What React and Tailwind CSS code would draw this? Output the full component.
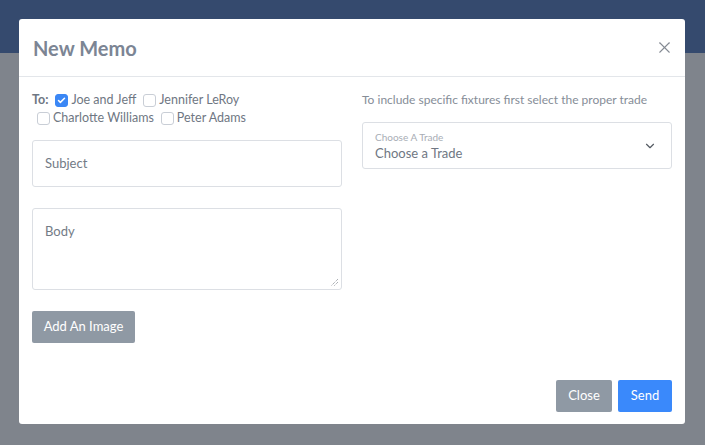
import { Check, ChevronDown, X } from 'lucide-react'

const recipients = [
  [{ name: 'Joe and Jeff', checked: true }, { name: 'Jennifer LeRoy' }],
  [{ name: 'Charlotte Williams' }, { name: 'Peter Adams' }],
]

function Box({ name, checked }) {
  return (
    <label className="flex items-center gap-[3px]">
      <span
        className={`flex h-[13px] w-[13px] items-center justify-center rounded-[3px] border ${
          checked ? 'border-[#3b87f5] bg-[#3b87f5]' : 'border-[#c9ced6] bg-white'
        }`}
      >
        {checked && <Check size={9} strokeWidth={4} className="text-white" />}
      </span>
      <span>{name}</span>
    </label>
  )
}

export default function App() {
  return (
    <div className="relative h-[445px] w-[705px] overflow-hidden bg-[#7f848c] font-['Lato',sans-serif]">
      <div className="h-[53px] bg-[#354a6e]" />

      <div className="absolute left-[19px] top-[19px] flex h-[405px] w-[666px] flex-col rounded-[3px] bg-white">
        <div className="flex h-[58px] items-center justify-between border-b border-[#e3e6ea] pl-[14px] pr-[11px]">
          <h2 className="text-[20px] font-bold text-[#7c8594]">New Memo</h2>
          <X size={19} strokeWidth={1.4} className="text-[#858b94]" />
        </div>

        <div className="flex flex-1 gap-[20px] px-[13px] pt-[15px]">
          <div className="flex w-[310px] flex-col text-[12.5px] text-[#6f7783]">
            <div className="flex flex-col gap-[2px] leading-[16px]">
              <div className="flex items-center gap-[7px]">
                <span className="font-bold">To:</span>
                <Box {...recipients[0][0]} />
                <Box {...recipients[0][1]} />
              </div>
              <div className="flex items-center gap-[7px] pl-[5px]">
                <Box {...recipients[1][0]} />
                <Box {...recipients[1][1]} />
              </div>
            </div>

            <div className="mt-[14px] flex h-[47px] items-center rounded-[3px] border border-[#dcdfe4] px-[12px] text-[13px] text-[#737b86]">
              Subject
            </div>

            <div className="relative mt-[21px] h-[82px] rounded-[3px] border border-[#dcdfe4] px-[12px] pt-[13px] text-[13px] text-[#737b86]">
              Body
              <svg className="absolute bottom-[2px] right-[2px]" width="9" height="9" viewBox="0 0 9 9">
                <path d="M8 1 L1 8 M8 4 L4 8" stroke="#8a8f96" strokeWidth="1" strokeDasharray="1 1" />
              </svg>
            </div>

            <button className="mt-[21px] h-[32px] w-[103px] rounded-[2px] bg-[#8f99a4] text-[13px] text-white">
              Add An Image
            </button>
          </div>

          <div className="flex w-[310px] flex-col">
            <p className="text-[12px] leading-[16px] text-[#868d97]">
              To include specific fixtures first select the proper trade
            </p>
            <div className="mt-[14px] flex h-[47px] items-center justify-between rounded-[3px] border border-[#dcdfe4] pl-[12px] pr-[14px]">
              <div className="flex flex-col">
                <span className="text-[10px] leading-[12px] text-[#a8adb5]">Choose A Trade</span>
                <span className="mt-[3px] text-[13px] leading-[15px] text-[#6f7783]">Choose a Trade</span>
              </div>
              <ChevronDown size={14} strokeWidth={2} className="text-[#555b63]" />
            </div>
          </div>
        </div>

        <div className="flex justify-end gap-[6px] pb-[12px] pr-[13px]">
          <button className="h-[32px] w-[56px] rounded-[2px] bg-[#8f99a4] text-[13px] text-white">Close</button>
          <button className="h-[32px] w-[54px] rounded-[2px] bg-[#3a89fb] text-[13px] text-white">Send</button>
        </div>
      </div>
    </div>
  )
}
